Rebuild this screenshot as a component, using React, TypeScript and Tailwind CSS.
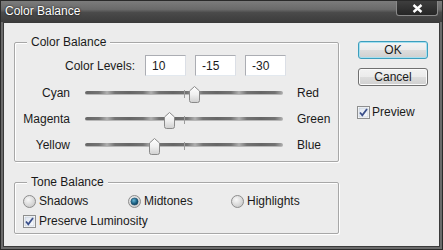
import React from "react";

const font = { fontFamily: '"Liberation Sans", Arial, sans-serif' };

function Thumb({ value }: { value: number }) {
  return (
    <svg
      className="absolute top-[6px]"
      style={{ left: 99 + value - 5 }}
      width="11"
      height="17"
      viewBox="0 0 11 17"
    >
      <defs>
        <linearGradient id={`tg${value}`} x1="0" y1="0" x2="0" y2="1">
          <stop offset="0" stopColor="#ffffff" />
          <stop offset="0.5" stopColor="#f0f0f0" />
          <stop offset="1" stopColor="#cfcfcf" />
        </linearGradient>
      </defs>
      <path
        d="M0.5,5 L5.5,0.5 L10.5,5 L10.5,14.5 Q10.5,16.5 8.5,16.5 L2.5,16.5 Q0.5,16.5 0.5,14.5 Z"
        fill={`url(#tg${value})`}
        stroke="#8a8a8a"
        strokeWidth="1"
      />
    </svg>
  );
}

function SliderRow({ left, right, value }: { left: string; right: string; value: number }) {
  return (
    <div className="flex items-center h-[26px]">
      <div className="w-[55px] text-right">{left}</div>
      <div className="relative ml-[15px] w-[198px] h-[26px] flex items-center">
        <div className="w-full h-[4px] rounded-[2px] border-b border-[#b8b8b8] bg-[repeating-linear-gradient(90deg,#666666_0px,#737373_14px,#b0b0b0_22px,#737373_30px,#666666_44px)]" />
        <div className="absolute left-[99px] top-[10px] w-px h-[8px] bg-[#9c9c9c]" />
        <Thumb value={value} />
      </div>
      <div className="ml-[14px]">{right}</div>
    </div>
  );
}

function Radio({ checked }: { checked?: boolean }) {
  return (
    <svg width="13" height="13" viewBox="0 0 13 13">
      <defs>
        <radialGradient id="ru" cx="0.4" cy="0.35" r="0.7">
          <stop offset="0" stopColor="#f8f8f8" />
          <stop offset="1" stopColor="#c8c8c8" />
        </radialGradient>
        <radialGradient id="rc" cx="0.4" cy="0.35" r="0.7">
          <stop offset="0" stopColor="#6ab6d4" />
          <stop offset="0.6" stopColor="#1d6487" />
          <stop offset="1" stopColor="#0d3b55" />
        </radialGradient>
      </defs>
      <circle cx="6.5" cy="6.5" r="6" fill="url(#ru)" stroke="#8d8d8d" />
      {checked && <circle cx="6.5" cy="6.5" r="3.6" fill="url(#rc)" stroke="#1a4a66" strokeWidth="0.6" />}
    </svg>
  );
}

function Check() {
  return (
    <svg width="13" height="13" viewBox="0 0 13 13">
      <defs>
        <linearGradient id="cb" x1="0" y1="0" x2="1" y2="1">
          <stop offset="0" stopColor="#dfe6f0" />
          <stop offset="1" stopColor="#f8fafc" />
        </linearGradient>
      </defs>
      <rect x="0.5" y="0.5" width="12" height="12" fill="#ffffff" stroke="#8e8f8f" />
      <rect x="2" y="2" width="9" height="9" fill="url(#cb)" stroke="#b9c3d0" strokeWidth="0.6" />
      <path d="M3,6.5 L5.3,9.3 L10,3" fill="none" stroke="#3a4f8a" strokeWidth="1.8" />
    </svg>
  );
}

function Group({ label, className, children }: { label: string; className: string; children: React.ReactNode }) {
  return (
    <div className={`relative border border-[#a7a7a7] rounded-[2px] shadow-[inset_1px_1px_0_#ffffff,1px_1px_0_#ffffff] ${className}`}>
      <span className="absolute -top-[8px] left-[12px] px-[4px] bg-[#ececec] leading-[14px]">{label}</span>
      {children}
    </div>
  );
}

function NumBox({ v }: { v: string }) {
  return (
    <div className="w-[41px] h-[21px] bg-white border border-[#abadb3] border-b-[#e3e9ef] border-r-[#dbdfe6] pl-[6px] flex items-center">
      {v}
    </div>
  );
}

export default function App() {
  return (
    <div
      className="w-[443px] h-[250px] bg-[#6b6b6b] border border-[#2a2a2a] flex flex-col text-[12px] text-[#1a1a1a]"
      style={font}
    >
      <div className="h-[21px] flex items-start justify-between bg-[linear-gradient(to_bottom,#7c7c7c_0%,#6a6a6a_40%,#4a4a4a_55%,#3c3c3c_100%)]">
        <div className="pl-[4px] pt-[3px] text-white text-[12px] leading-[15px] [text-shadow:0_0_2px_#000]">
          Color Balance
        </div>
        <div className="mr-[4px] w-[42px] h-[15px] rounded-b-[3px] bg-[linear-gradient(to_bottom,#3e3e3e,#262626)] border border-t-0 border-[#8a8a8a] flex items-center justify-center">
          <svg width="11" height="9" viewBox="0 0 11 9">
            <path d="M1.5,1 L9.5,8 M9.5,1 L1.5,8" stroke="#ffffff" strokeWidth="2.4" />
          </svg>
        </div>
      </div>
      <div className="flex-1 mx-[2px] mb-[2px] bg-[#ececec] border border-[#3a3a3a] flex">
        <div className="pl-[10px] pt-[19px] flex flex-col">
          <Group label="Color Balance" className="w-[325px] h-[120px]">
            <div className="flex items-center mt-[12px]">
              <div className="w-[120px] text-right">Color Levels:</div>
              <div className="ml-[10px] flex gap-[9px]">
                <NumBox v="10" />
                <NumBox v="-15" />
                <NumBox v="-30" />
              </div>
            </div>
            <div className="mt-[4px] flex flex-col">
              <SliderRow left="Cyan" right="Red" value={10} />
              <SliderRow left="Magenta" right="Green" value={-15} />
              <SliderRow left="Yellow" right="Blue" value={-30} />
            </div>
          </Group>
          <Group label="Tone Balance" className="w-[325px] h-[52px] mt-[20px]">
            <div className="flex items-center h-[16px] mt-[10px] pl-[8px]">
              <div className="w-[105px] flex items-center gap-[3px]">
                <Radio />
                <span>Shadows</span>
              </div>
              <div className="w-[103px] flex items-center gap-[3px]">
                <Radio checked />
                <span>Midtones</span>
              </div>
              <div className="flex items-center gap-[3px]">
                <Radio />
                <span>Highlights</span>
              </div>
            </div>
            <div className="flex items-center h-[16px] mt-[4px] pl-[8px] gap-[3px]">
              <Check />
              <span>Preserve Luminosity</span>
            </div>
          </Group>
        </div>
        <div className="ml-[19px] pt-[18px] flex flex-col">
          <div className="w-[70px] h-[18px] rounded-[3px] border border-[#3c9ebd] shadow-[inset_0_0_0_1px_#a6e0f0] bg-[linear-gradient(to_bottom,#f4f4f4_0%,#ebebeb_50%,#dddddd_51%,#cfcfcf_100%)] flex items-center justify-center">
            OK
          </div>
          <div className="mt-[9px] w-[70px] h-[18px] rounded-[3px] border border-[#707070] shadow-[inset_0_0_0_1px_#fbfbfb] bg-[linear-gradient(to_bottom,#f2f2f2_0%,#ebebeb_50%,#dddddd_51%,#cfcfcf_100%)] flex items-center justify-center">
            Cancel
          </div>
          <div className="mt-[17px] flex items-center gap-[2px] -ml-[1px]">
            <Check />
            <span>Preview</span>
          </div>
        </div>
      </div>
    </div>
  );
}
